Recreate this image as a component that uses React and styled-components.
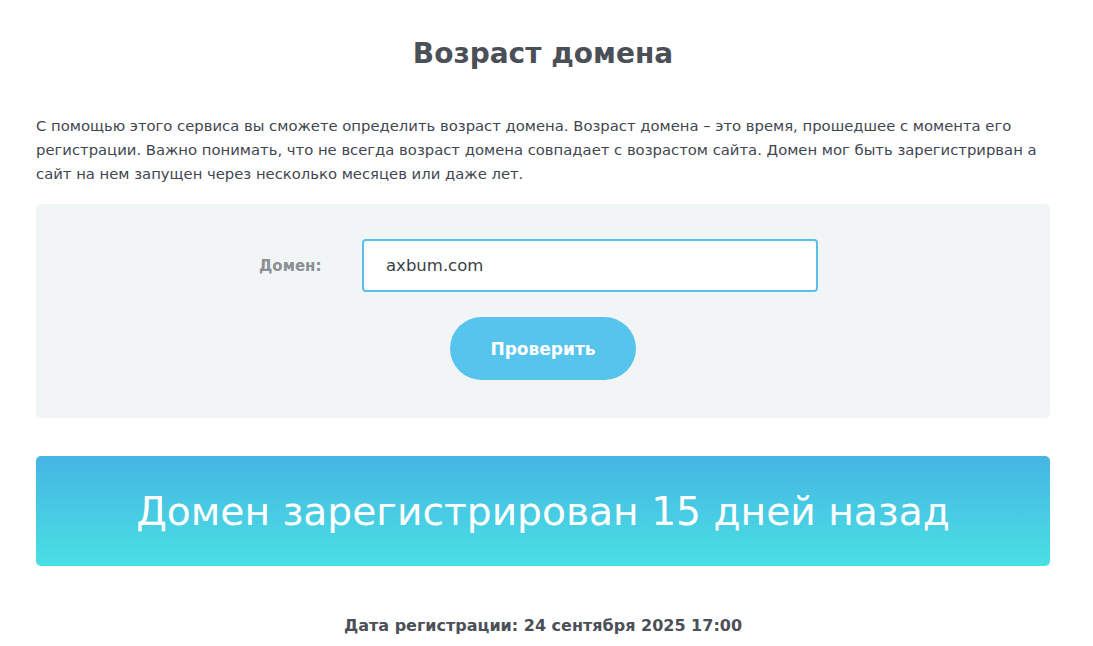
import React, { useState } from "react";
import styled, { createGlobalStyle } from "styled-components";

const GlobalStyle = createGlobalStyle`
  body {
    margin: 0;
    background: #ffffff;
    font-family: "DejaVu Sans", "Noto Sans", sans-serif;
    color: #454b55;
  }
`;

const Page = styled.div`
  width: 1014px;
  padding: 36px 0 0;
  box-sizing: border-box;
  margin-left: 36px;
`;

const Title = styled.h1`
  margin: 0;
  text-align: center;
  font-size: 28px;
  line-height: 36px;
  font-weight: 700;
  color: #4b5058;
`;

const Intro = styled.p`
  margin: 42px 0 0;
  font-size: 14.8px;
  line-height: 24px;
  color: #3f4650;
`;

const Panel = styled.form`
  margin-top: 18px;
  background: #f2f5f6;
  border-radius: 5px;
  padding: 35px 0 38px;
  display: flex;
  flex-direction: column;
  align-items: center;
`;

const Row = styled.div`
  display: flex;
  align-items: center;
  margin-right: 9px;
`;

const Label = styled.label`
  width: 103px;
  font-size: 15px;
  font-weight: 700;
  color: #8b9094;
`;

const Input = styled.input`
  width: 456px;
  height: 53px;
  box-sizing: border-box;
  border: 2px solid #5ac0e9;
  border-radius: 4px;
  padding: 0 22px;
  font-family: inherit;
  font-size: 16.5px;
  color: #3b3f45;
  background: #ffffff;
  outline: none;
`;

const Button = styled.button`
  margin-top: 25px;
  width: 186px;
  height: 63px;
  border: none;
  border-radius: 32px;
  background: #56c4ec;
  color: #ffffff;
  font-family: inherit;
  font-size: 17px;
  font-weight: 700;
  cursor: pointer;
`;

const Result = styled.div`
  margin-top: 38px;
  height: 110px;
  border-radius: 5px;
  background: linear-gradient(180deg, #46b5e4 0%, #49e0e3 100%);
  display: flex;
  align-items: center;
  justify-content: center;
  color: #ffffff;
  font-size: 39.2px;
  font-weight: 400;
`;

const RegDate = styled.div`
  margin-top: 50px;
  text-align: center;
  font-size: 16px;
  font-weight: 700;
  color: #4b5058;
`;

export default function App() {
  const [domain, setDomain] = useState("axbum.com");

  return (
    <Page>
      <GlobalStyle />
      <Title>Возраст домена</Title>
      <Intro>
        С помощью этого сервиса вы сможете определить возраст домена. Возраст домена – это время, прошедшее с момента его<br />
        регистрации. Важно понимать, что не всегда возраст домена совпадает с возрастом сайта. Домен мог быть зарегистрирван а<br />
        сайт на нем запущен через несколько месяцев или даже лет.
      </Intro>
      <Panel onSubmit={(e) => e.preventDefault()}>
        <Row>
          <Label>Домен:</Label>
          <Input value={domain} onChange={(e) => setDomain(e.target.value)} />
        </Row>
        <Button type="submit">Проверить</Button>
      </Panel>
      <Result>Домен зарегистрирован 15 дней назад</Result>
      <RegDate>Дата регистрации: 24 сентября 2025 17:00</RegDate>
    </Page>
  );
}
